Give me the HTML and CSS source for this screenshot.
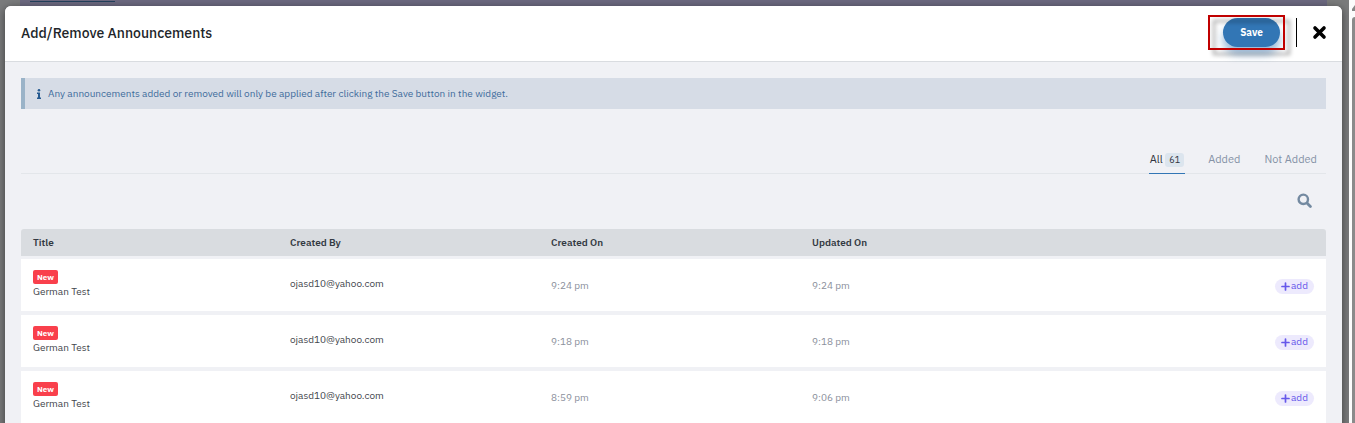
FILE: index.html
```html
<!DOCTYPE html>
<html lang="en">
<head>
    <meta charset="UTF-8">
    <meta name="viewport" content="width=device-width, initial-scale=1.0">
    <title>Add/Remove Announcements</title>
    <link rel="stylesheet" href="styles.css">
</head>
<body>
    <svg class="sprite" aria-hidden="true">
        <symbol id="plus" viewBox="0 0 9 9"><path d="M4.5 1v7M1 4.5h7" fill="none" stroke="currentColor" stroke-width="1.700" stroke-linecap="round"/></symbol>
    </svg>

    <div class="overlay">
        <div class="page-strip"></div>
        <main class="modal" role="dialog" aria-labelledby="modal-title">
            <header class="modal-header">
                <h1 id="modal-title">Add/Remove Announcements</h1>
                <div class="save-wrap">
                    <button class="save-button" type="button">Save</button>
                </div>
                <button class="close-button" type="button" aria-label="Close">
                    <svg width="15" height="15" viewBox="0 0 15 15"><path d="M3 3l9 9M12 3l-9 9" fill="none" stroke="currentColor" stroke-width="3.600" stroke-linecap="round"/></svg>
                </button>
            </header>

            <section class="modal-body">
                <p class="notice">
                    <svg width="4" height="10" viewBox="0 0 4 10" fill="currentColor" aria-hidden="true"><circle cx="2" cy="1.3" r="1.3"/><path d="M0 3.6h3v4.9h1V10H0V8.500h1V5H0z"/></svg>
                    Any announcements added or removed will only be applied after clicking the Save button in the widget.
                </p>

                <nav class="tabs">
                    <a class="tab active" href="#all">All <span class="count">61</span></a>
                    <a class="tab" href="#added">Added</a>
                    <a class="tab" href="#not-added">Not Added</a>
                </nav>

                <div class="tools">
                    <button class="search-button" type="button" aria-label="Search">
                        <svg width="15" height="15" viewBox="0 0 15 15" fill="none" stroke="currentColor" stroke-linecap="round"><circle cx="6.300" cy="6.300" r="4.700" stroke-width="2.400"/><path d="M10.200 10.200l3.200 3.200" stroke-width="2.800"/></svg>
                    </button>
                </div>

                <table class="announcements">
                    <thead>
                        <tr>
                            <th>Title</th>
                            <th>Created By</th>
                            <th>Created On</th>
                            <th>Updated On</th>
                            <th></th>
                        </tr>
                    </thead>
                    <tbody>
                        <tr>
                            <td class="title"><span class="badge">New</span>German Test</td>
                            <td class="email">ojasd10@yahoo.com</td>
                            <td class="time">9:24 pm</td>
                            <td class="time">9:24 pm</td>
                            <td class="action"><button class="add-button" type="button"><svg width="9" height="9"><use href="#plus"/></svg>add</button></td>
                        </tr>
                        <tr>
                            <td class="title"><span class="badge">New</span>German Test</td>
                            <td class="email">ojasd10@yahoo.com</td>
                            <td class="time">9:18 pm</td>
                            <td class="time">9:18 pm</td>
                            <td class="action"><button class="add-button" type="button"><svg width="9" height="9"><use href="#plus"/></svg>add</button></td>
                        </tr>
                        <tr>
                            <td class="title"><span class="badge">New</span>German Test</td>
                            <td class="email">ojasd10@yahoo.com</td>
                            <td class="time">8:59 pm</td>
                            <td class="time">9:06 pm</td>
                            <td class="action"><button class="add-button" type="button"><svg width="9" height="9"><use href="#plus"/></svg>add</button></td>
                        </tr>
                    </tbody>
                </table>
            </section>
        </main>
    </div>
    <div class="scrollbar">
        <svg width="3" height="6" viewBox="0 0 3 6" aria-hidden="true"><path d="M3 0v6H0V4z" fill="#888"/></svg>
        <div class="thumb"></div>
    </div>
</body>
</html>
```

FILE: styles.css
```css
* {
    box-sizing: border-box;
}
body {
    display: flex;
    height: 100vh;
    margin: 0;
    overflow: hidden;
    font-family: "IBM Plex Sans", Inter, "Noto Sans", sans-serif;
    font-size: 10px;
    line-height: 14px;
    color: #43464d;
}
button {
    padding: 0;
    border: none;
    background: none;
    font: inherit;
    cursor: pointer;
}
svg {
    display: block;
}
.sprite {
    display: none;
}
.overlay {
    flex: 1;
    display: flex;
    flex-direction: column;
    padding: 0 7px 0 5px;
    background-color: #7a7b7c;
}
.page-strip {
    height: 6px;
    flex-shrink: 0;
    margin: 0 15px;
    background: linear-gradient(#23405c, #23405c) 10px 1px / 85px 1px no-repeat #6c6980;
}
.modal {
    flex: 1;
    border-radius: 6px 6px 0 0;
    background-color: #f0f1f5;
    box-shadow: 0 2px 8px rgba(0, 0, 0, 0.5);
}
.modal-header {
    display: flex;
    align-items: center;
    height: 56px;
    padding: 0 15px 2px 16px;
    border-bottom: 1px solid #d9dce0;
    border-radius: 6px 6px 0 0;
    background-color: #fff;
}
.modal-header h1 {
    flex: 1;
    margin: 0;
    font-size: 14px;
    font-weight: 500;
    line-height: 20px;
    color: #212529;
}
.save-wrap {
    position: relative;
    padding-right: 16px;
    border-right: 1px solid #000;
}
/* red frame around the Save button */
.save-wrap::after {
    content: "";
    position: absolute;
    top: -3px;
    left: -15px;
    right: 11px;
    bottom: -3px;
    border: 2px solid #c00000;
    filter: drop-shadow(5px 5px 2px rgba(0, 0, 0, 0.4));
    pointer-events: none;
}
.save-button {
    display: block;
    width: 57px;
    height: 29px;
    border-radius: 15px;
    background-color: #3276b5;
    box-shadow: 0 7px 9px rgba(50, 118, 181, 0.5);
    font-weight: 700;
    color: #fff;
}
.close-button {
    margin-left: 15px;
    color: #000;
}
.modal-body {
    padding: 16px;
}
.notice {
    display: flex;
    align-items: center;
    gap: 7px;
    height: 31px;
    margin: 0;
    padding-left: 12px;
    border-left: 4px solid #9ab3c8;
    background-color: #d6dce6;
    color: #3f6c9c;
}
.notice svg {
    color: #265a90;
}
.tabs {
    display: flex;
    justify-content: flex-end;
    gap: 22px;
    margin-top: 36px;
    padding-right: 8px;
    border-bottom: 1px solid #e3e6ea;
}
.tab {
    height: 29px;
    margin-bottom: -1px;
    padding: 6px 1px 0;
    font-size: 11px;
    line-height: 16px;
    color: #8592a6;
    text-decoration: none;
}
.tab.active {
    border-bottom: 1px solid #3276b5;
    color: #303540;
}
.count {
    display: inline-block;
    padding: 0 4px;
    border-radius: 3px;
    background-color: #dce5ee;
    font-size: 9px;
    line-height: 14px;
}
.tools {
    display: flex;
    justify-content: flex-end;
    padding: 19px 14px 21px;
}
.search-button {
    color: #748aa1;
}
.announcements {
    width: 100%;
    table-layout: fixed;
    border-spacing: 0;
}
.announcements th,
.announcements td {
    padding: 0 8px;
    text-align: left;
}
.announcements th {
    height: 30px;
    border-bottom: 3px solid #f0f1f5;
    background-color: #d9dce0;
    font-weight: 600;
    color: #343a43;
}
.announcements td {
    height: 56px;
    border-bottom: 4px solid #f0f1f5;
    background-color: #fff;
}
.announcements th:first-child {
    border-top-left-radius: 3px;
}
.announcements th:last-child {
    border-top-right-radius: 3px;
}
.announcements th:first-child,
.announcements td:first-child {
    padding-left: 12px;
}
.announcements .title,
.announcements .email {
    padding-bottom: 2px;
}
.badge {
    display: block;
    width: 25px;
    margin-bottom: 1px;
    border-radius: 2px;
    background-color: #f9404c;
    font-size: 8px;
    font-weight: 700;
    text-align: center;
    color: #fff;
}
.announcements .time {
    padding-top: 2px;
    color: #8b909c;
}
.announcements .action {
    padding-top: 2px;
    padding-right: 12px;
}
.add-button {
    display: flex;
    align-items: center;
    justify-content: center;
    gap: 1px;
    width: 39px;
    height: 15px;
    margin-left: auto;
    border-radius: 8px;
    background-color: #edeafd;
    color: #6658ea;
}
.scrollbar {
    display: flex;
    flex-direction: column;
    gap: 6px;
    width: 6px;
    padding: 5px 0 0 3px;
    background-color: #fcfcfc;
}
.thumb {
    flex: 1;
    border-top-left-radius: 3px;
    background-color: #8b8b8b;
}
```
